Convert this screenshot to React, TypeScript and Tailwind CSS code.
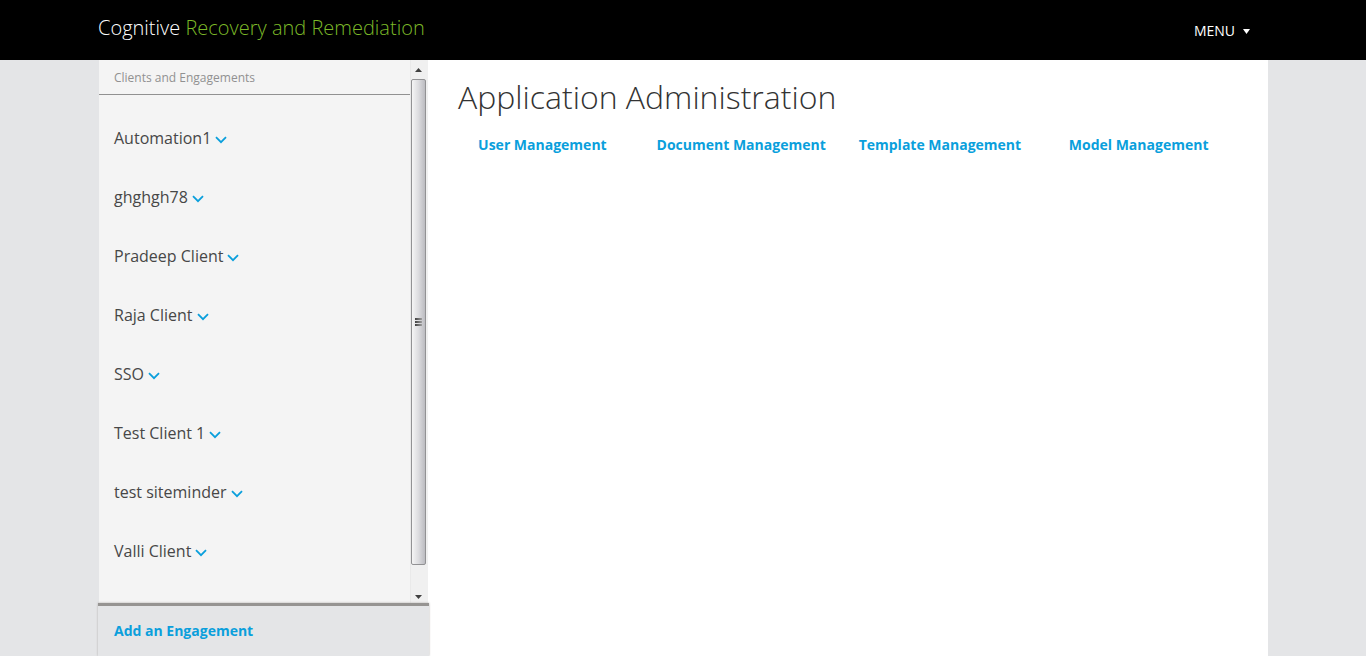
import React from "react";

const clients = [
  "Automation1",
  "ghghgh78",
  "Pradeep Client",
  "Raja Client",
  "SSO",
  "Test Client 1",
  "test siteminder",
  "Valli Client",
];

const sections = [
  "User Management",
  "Document Management",
  "Template Management",
  "Model Management",
];

function Chevron() {
  return (
    <svg className="mt-1 h-2 w-3" viewBox="0 0 12 8" fill="none" aria-hidden="true">
      <path d="M1 1.2 L6 6.2 L11 1.2" stroke="#0a9fdc" strokeWidth="1.8" />
    </svg>
  );
}

function Scrollbar() {
  return (
    <div className="flex w-[17px] shrink-0 flex-col bg-[#f0f0f0] pr-0.5" aria-hidden="true">
      <div className="flex h-[19px] items-center justify-center">
        <svg className="h-1 w-[7px]" viewBox="0 0 7 4">
          <path d="M0 4 L3.5 0 L7 4Z" fill="#404040" />
        </svg>
      </div>
      <div className="flex flex-1 items-center justify-center rounded-[2px] border border-[#929294] bg-linear-to-r from-[#f5f5f5] via-[#dcdcdf] to-[#bcbcc1] pr-px">
        <div className="flex flex-col gap-px">
          <span className="h-0.5 w-[7px] bg-linear-to-r from-[#404040] to-[#a0a0a0]" />
          <span className="h-0.5 w-[7px] bg-linear-to-r from-[#404040] to-[#a0a0a0]" />
          <span className="h-0.5 w-[7px] bg-linear-to-r from-[#404040] to-[#a0a0a0]" />
        </div>
      </div>
      <div className="flex h-[38px] items-end justify-center pb-1">
        <svg className="h-1 w-[7px]" viewBox="0 0 7 4">
          <path d="M0 0 L3.5 4 L7 0Z" fill="#404040" />
        </svg>
      </div>
    </div>
  );
}

function Sidebar() {
  return (
    <aside className="flex w-[330px] shrink-0 flex-col">
      <div className="flex flex-1 border-l border-[#e4e5e7] bg-[#f4f4f4]">
        <div className="flex-1 border-r border-[#e9e9e9]">
          <h2 className="h-[35px] border-b border-[#919191] pl-[15px] text-xs leading-[36px] text-[#919191]">
            Clients and Engagements
          </h2>
          <ul className="pt-[13px]">
            {clients.map((name) => (
              <li key={name} className="flex h-[59px] items-center pl-[15px]">
                <button type="button" className="flex items-center gap-1 text-base text-[#474747]">
                  {name}
                  <Chevron />
                </button>
              </li>
            ))}
          </ul>
        </div>
        <Scrollbar />
      </div>
      <div className="-mr-px flex h-[53px] items-center border-t-[3px] border-[#969492] bg-[#e4e5e7] pl-4 shadow-[0_0_2px_#b0aeac]">
        <a href="#add" className="text-sm font-bold text-[#0a9fdc]">
          Add an Engagement
        </a>
      </div>
    </aside>
  );
}

export default function App() {
  return (
    <div className="flex min-h-screen flex-col bg-[#e4e5e7] font-['Open_Sans',sans-serif]">
      <header className="bg-black">
        <div className="mx-auto flex h-[60px] max-w-[1170px] items-center justify-between">
          <a href="#home" className="pb-1 text-xl font-light text-white">
            Cognitive <span className="text-[#7cb928]">Recovery and Remediation</span>
          </a>
          <button type="button" className="mr-[18px] flex items-center gap-2 pt-0.5 text-sm text-white">
            MENU
            <svg className="h-[5px] w-[7px]" viewBox="0 0 7 5" aria-hidden="true">
              <path d="M0 0 H7 L3.5 5Z" fill="currentColor" />
            </svg>
          </button>
        </div>
      </header>
      <div className="mx-auto flex w-full max-w-[1170px] flex-1 bg-white">
        <Sidebar />
        <main className="flex-1 pt-[13px] pr-[30px] pl-[15px]">
          <h1 className="pl-[15px] text-[32px] leading-[48px] font-light text-[#333333]">
            Application Administration
          </h1>
          <nav className="mt-[14px] grid grid-cols-4 text-center text-sm font-bold text-[#0a9fdc]">
            {sections.map((label) => (
              <a key={label} href="#section" className="whitespace-nowrap">
                {label}
              </a>
            ))}
          </nav>
        </main>
      </div>
    </div>
  );
}
